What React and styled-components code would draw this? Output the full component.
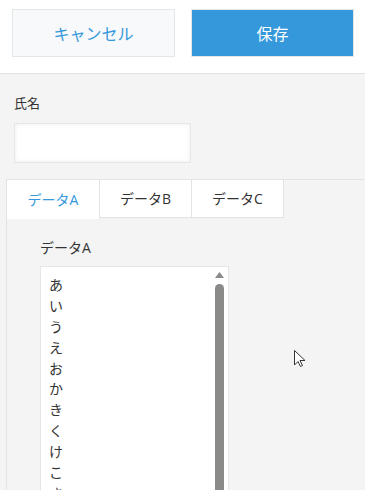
import React from "react";
import styled, { createGlobalStyle } from "styled-components";

const Global = createGlobalStyle`
  html, body { margin: 0; padding: 0; }
  body {
    width: 365px; height: 490px; overflow: hidden;
    background: #f4f4f4;
    font-family: "Open Sans", "Noto Sans CJK JP", sans-serif;
    color: #333;
  }
`;

const Page = styled.div`
  position: relative;
  width: 365px;
  height: 490px;
  overflow: hidden;
  background: #f4f4f4;
`;

const Toolbar = styled.div`
  display: flex;
  gap: 16px;
  padding: 9px 11px 16px 12px;
  background: #fff;
  border-bottom: 1px solid #e3e3e3;
`;

const Button = styled.button`
  box-sizing: border-box;
  width: ${(p) => p.$w}px;
  height: 48px;
  border: 1px solid #e3e7e8;
  background: ${(p) => (p.$primary ? "#3498db" : "#f7f9fa")};
  color: ${(p) => (p.$primary ? "#fff" : "#3498db")};
  font-family: "Open Sans", "Noto Sans CJK JP", sans-serif;
  font-size: 16px;
  padding: 0;
  display: flex;
  align-items: center;
  justify-content: center;
`;

const Field = styled.div`
  padding: 20px 0 0 14px;
`;

const Label = styled.div`
  font-size: 13px;
  line-height: 18px;
  color: #333;
  font-family: "Noto Sans CJK JP", sans-serif;
`;

const Input = styled.div`
  box-sizing: border-box;
  margin-top: 11px;
  width: 177px;
  height: 40px;
  background: #fff;
  border: 1px solid #e3e7e8;
  box-shadow: inset 0 0 4px rgba(0, 0, 0, 0.08);
`;

const TabArea = styled.div`
  margin: 16px 0 0 6px;
  border-top: 1px solid #e3e3e3;
  border-left: 1px solid #e3e3e3;
  height: 320px;
`;

const TabBar = styled.div`
  display: flex;
  margin-top: -1px;
`;

const Tab = styled.div`
  box-sizing: border-box;
  width: ${(p) => p.$w}px;
  height: ${(p) => (p.$active ? 40 : 39)}px;
  background: #fff;
  border-top: 1px solid #e3e3e3;
  border-right: 1px solid #e3e3e3;
  border-bottom: ${(p) => (p.$active ? "none" : "1px solid #e3e3e3")};
  color: ${(p) => (p.$active ? "#3498db" : "#333")};
  font-size: 14px;
  font-family: "Open Sans", "Noto Sans CJK JP", sans-serif;
  display: flex;
  align-items: center;
  justify-content: center;
  padding-bottom: 1px;
`;

const Panel = styled.div`
  padding: 19px 0 0 33px;
`;

const PanelLabel = styled.div`
  font-size: 14px;
  line-height: 20px;
  font-family: "Open Sans", "Noto Sans CJK JP", sans-serif;
`;

const ListBox = styled.div`
  box-sizing: border-box;
  margin-top: 8px;
  width: 189px;
  height: 240px;
  background: #fff;
  border: 1px solid #e3e7e8;
  display: flex;
`;

const Items = styled.div`
  flex: 1;
  padding: 7px 0 0 8px;
`;

const Item = styled.div`
  font-size: 14px;
  line-height: 20.9px;
  height: 20.9px;
  font-family: "Noto Sans CJK JP", sans-serif;
  color: #333;
`;

const Scrollbar = styled.div`
  width: 12px;
  margin-right: 3px;
  display: flex;
  flex-direction: column;
  align-items: center;
  padding-top: 5px;
`;

const Thumb = styled.div`
  margin-top: 6px;
  width: 9px;
  flex: 1;
  background: #8a8a88;
  border-radius: 5px 5px 0 0;
`;

const Cursor = styled.svg`
  position: absolute;
  left: 294px;
  top: 350px;
`;

const kana = ["あ", "い", "う", "え", "お", "か", "き", "く", "け", "こ", "さ"];

export default function App() {
  return (
    <Page>
      <Global />
      <Toolbar>
        <Button $w={163}>キャンセル</Button>
        <Button $w={163} $primary>保存</Button>
      </Toolbar>
      <Field>
        <Label>氏名</Label>
        <Input />
      </Field>
      <TabArea>
        <TabBar>
          <Tab $w={93} $active>データA</Tab>
          <Tab $w={92}>データB</Tab>
          <Tab $w={92}>データC</Tab>
        </TabBar>
        <Panel>
          <PanelLabel>データA</PanelLabel>
          <ListBox>
            <Items>
              {kana.map((k) => (
                <Item key={k}>{k}</Item>
              ))}
            </Items>
            <Scrollbar>
              <svg width="9" height="6" viewBox="0 0 9 6">
                <path d="M4.5 0 L9 6 L0 6 Z" fill="#8a8a88" />
              </svg>
              <Thumb />
            </Scrollbar>
          </ListBox>
        </Panel>
      </TabArea>
      <Cursor width="12" height="17" viewBox="0 0 12 17">
        <path
          d="M0.5 0.5 L0.5 15 L4 11.5 L6.5 16.5 L8.5 15.5 L6 10.5 L11 10.5 Z"
          fill="#fff"
          stroke="#333"
          strokeWidth="1"
        />
      </Cursor>
    </Page>
  );
}
